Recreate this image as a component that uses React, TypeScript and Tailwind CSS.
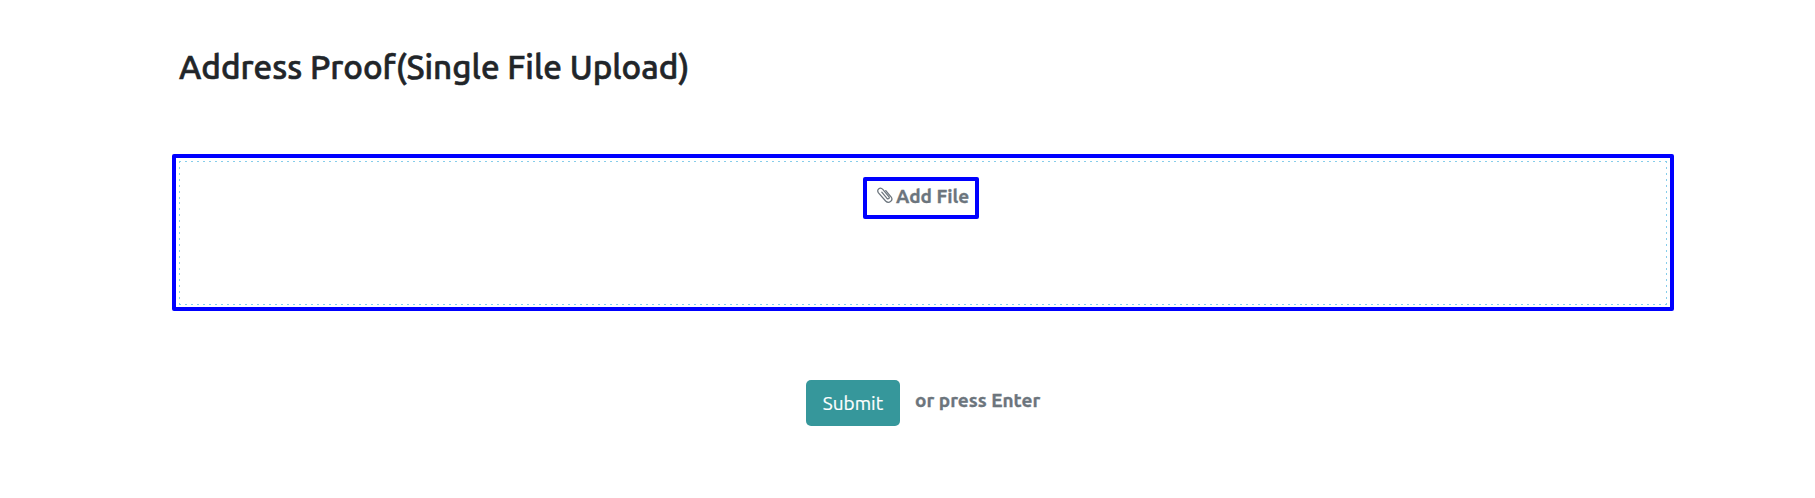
function PaperclipIcon() {
  return (
    <svg width="16" height="18" viewBox="0 0 16 18" fill="none" stroke="#6c757d" strokeWidth="1.25" strokeLinecap="round" className="shrink-0">
      <path d="M4.8 6.2 L9.8 12.2 C11.3 13.7 13 12.2 11.8 10.7 L5.8 3.4 C3.2 0.4 -0.8 3.6 1.5 6.8 L8.6 15 C11.8 18.2 16.6 14.7 14.2 11 L8.8 4.6" />
    </svg>
  );
}

export default function App() {
  return (
    <main className="h-[498px] w-full overflow-hidden bg-white pl-[172px] pt-[43px] font-['Ubuntu','Noto_Sans',sans-serif] text-[19px]">
      <h1 className="ml-[7px] h-[48px] whitespace-nowrap text-[33.25px] font-medium leading-[47px] text-[#212529] [-webkit-text-stroke:0.6px_#212529]">
        Address Proof(Single File Upload)
      </h1>
      <section className="mt-[63px] h-[157px] w-[1502px] rounded-[2px] border-4 border-[#0000ff] p-[3px] pb-[2px]">
        <div className="flex h-full items-start justify-center bg-[repeating-linear-gradient(90deg,#87ceeb_0_2px,transparent_2px_5.992px),repeating-linear-gradient(90deg,#87ceeb_0_2px,transparent_2px_5.992px),repeating-linear-gradient(180deg,#87ceeb_0_2px,transparent_2px_5.917px),repeating-linear-gradient(180deg,#87ceeb_0_2px,transparent_2px_5.917px)] bg-[length:100%_1px,100%_1px,1px_100%,1px_100%] bg-[position:top_left,bottom_left,top_left,top_right] bg-no-repeat pt-[16px]">
          <label className="mr-[4px] flex h-[42px] w-[116px] rounded-[2px] border-4 border-[#0000ff] pl-[10px] pt-[5px] font-bold text-[#6c757d] [-webkit-text-stroke:0.3px_#6c757d]">
            <PaperclipIcon />
            <span className="ml-[3px] whitespace-nowrap leading-[20px]">Add File</span>
          </label>
        </div>
      </section>
      <div className="ml-[634px] mt-[69px] flex h-[46px] items-start">
        <button className="h-[46px] w-[94px] rounded-[5px] bg-[#36979b] text-center leading-[46px] text-white [-webkit-text-stroke:0.2px_#fff]">Submit</button>
        <span className="ml-[15px] whitespace-nowrap font-bold leading-[41px] text-[#6c757d] [-webkit-text-stroke:0.3px_#6c757d]">or press Enter</span>
      </div>
    </main>
  );
}
